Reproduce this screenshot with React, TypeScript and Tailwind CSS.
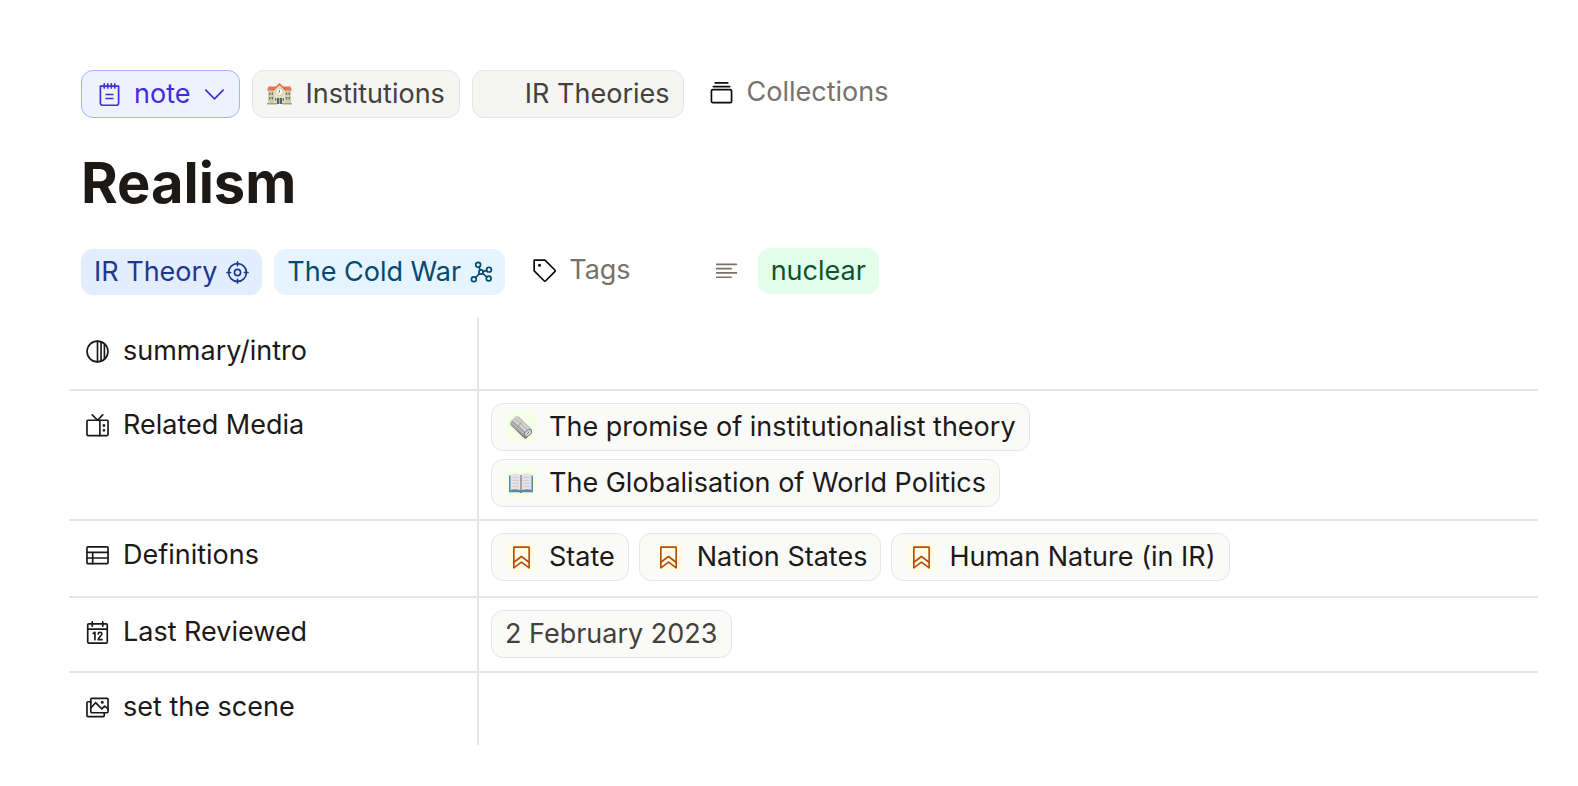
import React from 'react';

const strokeProps = {
  fill: 'none',
  stroke: 'currentColor',
  strokeWidth: 1.75,
  strokeLinecap: 'round' as const,
  strokeLinejoin: 'round' as const,
};

function Icon({ children, className = '' }: { children: React.ReactNode; className?: string }) {
  return (
    <svg viewBox="0 0 24 24" aria-hidden="true" className={`size-[23px] shrink-0 ${className}`} {...strokeProps}>
      {children}
    </svg>
  );
}

const NoteIcon = () => (
  <Icon>
    <path d="M2.500 3.200h19v18a2 2 0 0 1-2 2h-15a2 2 0 0 1-2-2z" />
    <path d="M6.500 1v4.200M10.200 1v4.200M13.900 1v4.200M17.500 1v4.200M8.500 12h7M8.500 16.200h7" />
  </Icon>
);

const ChevronIcon = () => (
  <Icon>
    <path d="M3 7.500l9 9 9-9" />
  </Icon>
);

const CollectionsIcon = () => (
  <Icon className="text-stone-950">
    <rect x="1.500" y="9" width="21" height="13.500" rx="1.500" />
    <path d="M3.500 5.800h17M5.500 2h13" />
  </Icon>
);

const TargetIcon = () => (
  <Icon>
    <circle cx="12" cy="12" r="9.300" />
    <circle cx="12" cy="12" r="3.200" />
    <path d="M12 1v3.800M12 19.200v3.800M1 12h3.800M19.200 12H23" />
  </Icon>
);

const MoleculeIcon = () => (
  <Icon>
    <circle cx="11.500" cy="11.500" r="2.200" />
    <circle cx="8.500" cy="4" r="2.500" />
    <circle cx="19.800" cy="9" r="2.500" />
    <circle cx="19.500" cy="18.200" r="2.500" />
    <circle cx="4" cy="19" r="2.500" />
    <path d="M9.400 6.400l1.300 3.100M13.700 11l3.700-1.200M13.200 13l4.300 3.600M9.900 13.100l-4.100 4.100" />
  </Icon>
);

const TagIcon = () => (
  <Icon className="text-stone-950">
    <path d="M1.200 1.200h11.300L22.800 11.500a1.200 1.200 0 0 1 0 1.700l-9.500 9.500a1.200 1.200 0 0 1-1.700 0L1.200 12.300z" />
    <circle cx="6.800" cy="6.500" r=".7" fill="currentColor" />
  </Icon>
);

const TextIcon = () => (
  <Icon className="text-stone-500">
    <path d="M1.800 4.500h20.500M1.800 9h15M1.800 13.500h20.500M1.800 18h15" />
  </Icon>
);

const ContrastIcon = () => (
  <Icon>
    <circle cx="12" cy="12" r="10.900" />
    <path d="M12 1.200v21.600M15.700 2v20M19.200 4v16" />
  </Icon>
);

const TvIcon = () => (
  <Icon>
    <rect x="1" y="6.500" width="22" height="16" rx="1" />
    <path d="M14.500 6.500v16M6.500 1L12 6.500 17.500 1" />
    <circle cx="18.700" cy="12" r=".6" fill="currentColor" />
    <circle cx="18.700" cy="17" r=".6" fill="currentColor" />
  </Icon>
);

const TableIcon = () => (
  <Icon>
    <rect x="1" y="3" width="22" height="17.500" rx="1" />
    <path d="M1 8.800h22M1 14.600h22M7 8.800v11.700" />
  </Icon>
);

const CalendarIcon = () => (
  <Icon>
    <rect x="1.800" y="3" width="20.400" height="20" rx="1" />
    <path d="M1.800 8.500h20.400M6.500 1v4.500M17.500 1v4.500M7.500 13l1.800-1.200v7.700M12.800 13.500c0-2.300 3.700-2.300 3.700 0 0 1.700-3.700 3.500-3.700 6h3.900" />
  </Icon>
);

const ImagesIcon = () => (
  <Icon>
    <rect x="5" y="2.500" width="18" height="15" rx="1" />
    <path d="M5 6H2a1 1 0 0 0-1 1v13.500a1 1 0 0 0 1 1h16a1 1 0 0 0 1-1v-3M5 12.500l5-5.500 6.500 6.500 3-3 3.500 3" />
    <circle cx="17" cy="6.500" r=".7" fill="currentColor" />
  </Icon>
);

const BookmarkIcon = () => (
  <Icon>
    <path d="M4 1.200h16v21.600l-8-6-8 6z" />
    <path d="M4 17l8-6 8 6" />
  </Icon>
);

const SchoolIcon = () => (
  <svg viewBox="0 0 25 24" aria-hidden="true" className="h-6 w-[25px] shrink-0">
    <path d="M1 8h23v14H1z" fill="#d9cfa6" />
    <path d="M1.500 4.500h22L25 8.500H0z" fill="#e2795a" />
    <path d="M7 8l5.500-5.500L18 8v14H7z" fill="#e9e0bb" />
    <path d="M6 8.500l6.500-6.500L19 8.500" fill="none" stroke="#dd6b4a" strokeWidth="1.500" />
    <circle cx="12.500" cy="10" r="3.700" fill="#fbfaf3" stroke="#c9bd92" strokeWidth=".8" />
    <path d="M12.500 8v2l-1.300 1" fill="none" stroke="#6b6a62" strokeWidth=".9" />
    <path
      d="M2 10.500h1.500v2.500H2zM4.700 10.500h1.500v2.500H4.700zM2 15h1.500v2.500H2zM4.700 15h1.500v2.500H4.700zM18.800 10.500h1.500v2.500h-1.500zM21.500 10.500H23v2.500h-1.500zM18.800 15h1.500v2.500h-1.500zM21.500 15H23v2.500h-1.500z"
      fill="#5d7f92"
    />
    <path d="M8 16h1.300v3H8zM15.700 16H17v3h-1.300z" fill="#5d7f92" />
    <path d="M10 16h5v6h-5z" fill="#4d6672" />
    <path d="M12.500 16v6" stroke="#d9cfa6" strokeWidth=".8" />
    <path d="M0 21h10v1.500H0zM15 21h10v1.500H15z" fill="#a7a184" />
  </svg>
);

const NewspaperIcon = () => (
  <svg viewBox="0 0 24 24" aria-hidden="true" className="size-6 shrink-0">
    <path d="M1 9.500l14.500 14 1.500.2L23 17 9 8z" fill="#77777a" />
    <path d="M1.500 6.500L7 1l3 .8L23 14.500c.5 1.500.2 3-1 4.300l-3.500 2.700c-1.300.6-2.700.4-3.500-.5L1 9z" fill="#b9b9ba" />
    <path d="M4 4l14 12.500M6.500 1.800L20 14.200" stroke="#d7d7d7" strokeWidth="1.800" />
    <path d="M2 8.500l13 12M3 6.500l13.500 12" stroke="#8d8d90" strokeWidth=".8" />
    <ellipse cx="19" cy="18" rx="4.300" ry="2.600" transform="rotate(-42 19 18)" fill="#dadada" stroke="#77777a" strokeWidth=".9" />
    <path d="M17.500 19.500l3-3" stroke="#77777a" strokeWidth=".9" />
    <path d="M12.500 7.200L7.500 14" stroke="#c3a860" strokeWidth="1.200" />
  </svg>
);

const BookIcon = () => (
  <svg viewBox="0 0 24 24" aria-hidden="true" className="size-6 shrink-0">
    <path d="M0 4.500h24v16.800H13.500l-1.500.9-1.500-.9H0z" fill="#4d8cae" />
    <path d="M1.500 3.200c4-1 8-.8 10.500.8v16c-3-1.200-6.500-1.200-10.500-.5zM22.500 3.200c-4-1-8-.8-10.500.8v16c3-1.200 6.500-1.200 10.500-.5z" fill="#e4e4e8" />
    <path d="M1.500 19.300c4-.7 7.500-.7 10.500.7 3-1.400 6.500-1.400 10.500-.7" fill="none" stroke="#77797f" strokeWidth="1" />
    <path d="M12 4v16.500" stroke="#7c7c83" strokeWidth="1.300" />
    <path d="M3.500 6.500c2-.3 4-.3 6 .3M3.500 9.500c2-.3 4-.3 6 .3M3.500 12.500c2-.3 4-.3 6 .3M3.500 15.500c2-.3 4-.3 6 .3M14.500 6.800c2-.6 4-.6 6-.3M14.500 9.800c2-.6 4-.6 6-.3M14.500 12.800c2-.6 4-.6 6-.3M14.500 15.800c2-.6 4-.6 6-.3" fill="none" stroke="#c4c4cb" strokeWidth=".9" />
  </svg>
);

function Chip({ icon, iconClass = '', className = 'text-stone-900', children }: {
  icon?: React.ReactNode;
  iconClass?: string;
  className?: string;
  children: React.ReactNode;
}) {
  return (
    <button className={`flex h-12 items-center gap-3 rounded-xl border border-stone-200 bg-stone-50 px-[13px] ${className}`}>
      {icon && (
        <span className={`flex size-8 shrink-0 items-center justify-center rounded-[10px] ${iconClass}`}>{icon}</span>
      )}
      <span>{children}</span>
    </button>
  );
}

const bookmark = { icon: <BookmarkIcon />, iconClass: 'bg-amber-50 text-amber-700' };

const rows = [
  { label: 'summary/intro', icon: <ContrastIcon />, height: 'h-[74px]', value: null },
  {
    label: 'Related Media',
    icon: <TvIcon />,
    height: 'h-[130px]',
    value: (
      <div className="flex flex-col items-start gap-2">
        <Chip icon={<NewspaperIcon />} iconClass="bg-lime-50">The promise of institutionalist theory</Chip>
        <Chip icon={<BookIcon />} iconClass="bg-lime-50">The Globalisation of World Politics</Chip>
      </div>
    ),
  },
  {
    label: 'Definitions',
    icon: <TableIcon />,
    height: 'h-[77px]',
    value: (
      <div className="flex flex-wrap gap-2.5">
        <Chip {...bookmark}>State</Chip>
        <Chip {...bookmark}>Nation States</Chip>
        <Chip {...bookmark}>Human Nature (in IR)</Chip>
      </div>
    ),
  },
  {
    label: 'Last Reviewed',
    icon: <CalendarIcon />,
    height: 'h-[75px]',
    value: <Chip className="text-stone-700">2 February 2023</Chip>,
  },
  { label: 'set the scene', icon: <ImagesIcon />, height: 'h-[72px]', value: null },
];

export default function App() {
  return (
    <main className="min-h-screen bg-white pt-[70px] pr-10 pb-10 pl-[69px] font-['Inter',sans-serif] text-[27px] leading-8 text-stone-900">
      <div className="flex flex-wrap items-center gap-3 pl-3">
        <button className="flex h-12 items-center gap-[13px] rounded-xl border border-indigo-300 bg-indigo-50 pr-[13px] pl-4 text-indigo-700">
          <NoteIcon />
          <span>note</span>
          <ChevronIcon />
        </button>
        <button className="flex h-12 items-center gap-[13px] rounded-xl border border-stone-200 bg-stone-100 px-3.5 text-stone-700">
          <SchoolIcon />
          <span>Institutions</span>
        </button>
        <button className="flex h-12 items-center rounded-xl border border-stone-200 bg-stone-100 pr-[13px] pl-[52px] text-stone-700">
          IR Theories
        </button>
        <button className="flex h-11 items-center gap-3.5 self-start px-3.5 text-stone-500">
          <CollectionsIcon />
          <span>Collections</span>
        </button>
      </div>

      <h1 className="mt-[31px] pl-3 text-[56px] leading-[68px] font-bold">Realism</h1>

      <div className="mt-8 flex flex-wrap items-center gap-3 pl-3">
        <button className="flex h-[46px] items-center gap-[9px] rounded-xl bg-[#e2edfe] px-[13px] text-blue-900">
          <span>IR Theory</span>
          <TargetIcon />
        </button>
        <button className="flex h-[46px] items-center gap-[9px] rounded-xl bg-[#e5f4ff] pr-3 pl-[13px] text-sky-900">
          <span>The Cold War</span>
          <MoleculeIcon />
        </button>
        <button className="flex h-[42px] items-center gap-[13px] self-start px-4 text-stone-500">
          <TagIcon />
          <span>Tags</span>
        </button>
        <div className="ml-14 flex h-11 items-center gap-5 self-start">
          <TextIcon />
          <button className="h-[46px] rounded-xl bg-[#e3fdeb] px-[13px] text-green-900">nuclear</button>
        </div>
      </div>

      <table className="mt-[22px] w-full table-fixed border-separate border-spacing-0">
        <tbody>
          {rows.map((row, i) => {
            const line = i < rows.length - 1 ? 'border-b-2' : '';
            return (
              <tr key={row.label} className={row.height}>
                <th scope="row" className={`w-[410px] border-r-2 border-stone-200 pt-[18px] pb-5 pl-[17px] align-top font-normal ${line}`}>
                  <span className="flex items-center gap-3.5">
                    {row.icon}
                    <span>{row.label}</span>
                  </span>
                </th>
                <td className={`border-stone-200 px-3 pt-3 pb-2.5 align-top ${line}`}>{row.value}</td>
              </tr>
            );
          })}
        </tbody>
      </table>
    </main>
  );
}
